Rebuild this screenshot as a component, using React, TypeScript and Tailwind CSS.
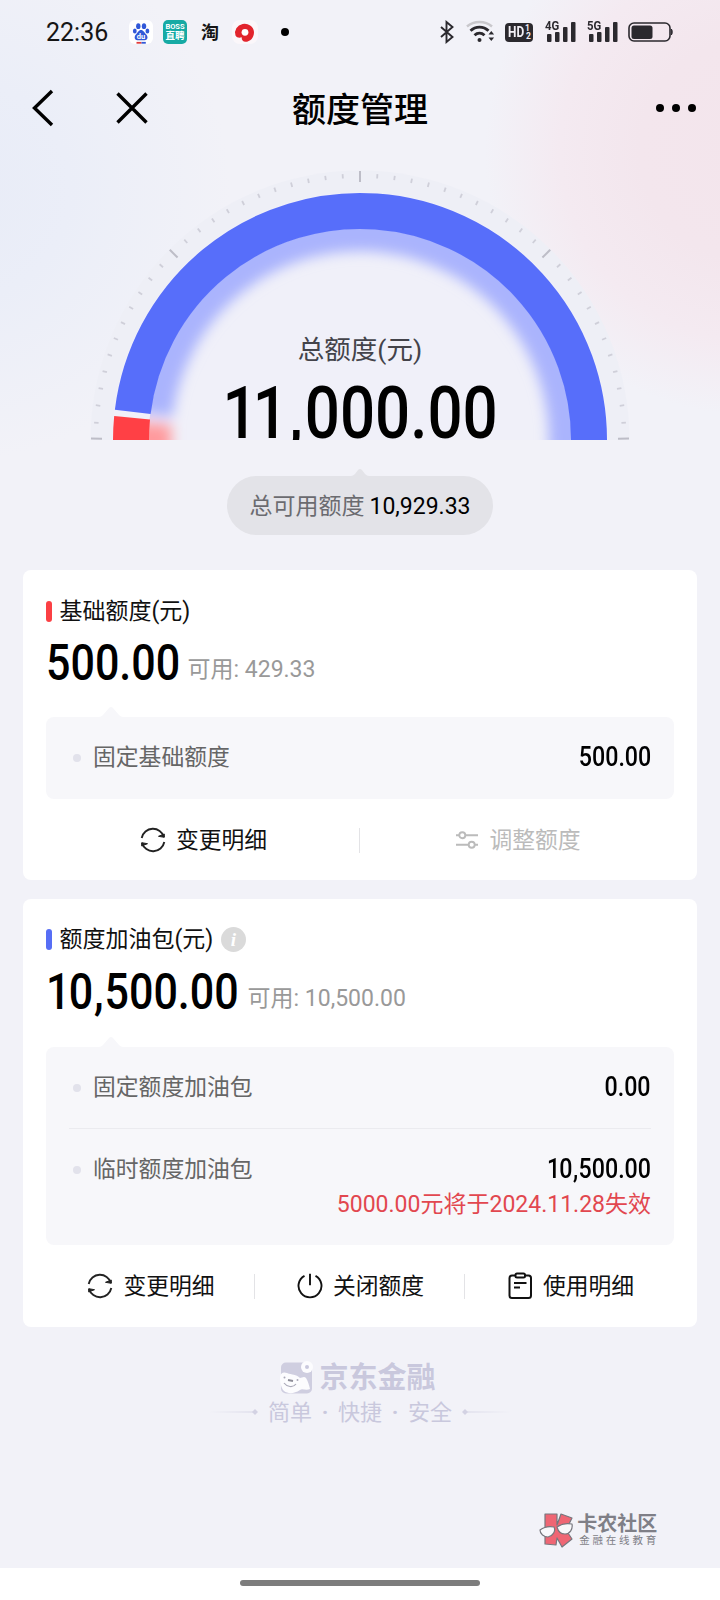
import type { ReactNode } from "react";

const CX = 360;
const CY = 288;

function point(radius: number, deg: number) {
  const a = (deg * Math.PI) / 180;
  return { x: CX - radius * Math.cos(a), y: CY - radius * Math.sin(a) };
}

function arc(radius: number, from: number, to: number) {
  const a = point(radius, from);
  const b = point(radius, to);
  return `M${a.x} ${a.y}A${radius} ${radius} 0 0 1 ${b.x} ${b.y}`;
}

function Gauge() {
  const ticks = Array.from({ length: 49 }, (_, i) => i);
  return (
    <svg className="absolute inset-0" width="720" height="288" viewBox="0 0 720 288">
      <defs>
        <clipPath id="inner">
          <circle cx={CX} cy={CY} r="211.5" />
        </clipPath>
        <filter id="soft" filterUnits="userSpaceOnUse" x="80" y="0" width="560" height="340">
          <feGaussianBlur stdDeviation="6.5" />
        </filter>
      </defs>
      <circle cx={CX} cy={CY} r="269.5" fill="#eeeff6" />
      <circle cx={CX} cy={CY} r="248" fill="#f0f0f9" />
      {ticks.map((i) => {
        const deg = i === 0 ? 0.3 : i === 48 ? 179.7 : i * 3.75;
        const major = i % 12 === 0;
        const a = point(major ? 258 : 262, deg);
        const b = point(major ? 269 : 266.5, deg);
        return (
          <line key={i} x1={a.x} y1={a.y} x2={b.x} y2={b.y} stroke={major ? "#bdbdc7" : "#cfcfd9"} strokeWidth={major ? 2 : 1.8} />
        );
      })}
      <g clipPath="url(#inner)">
        <g filter="url(#soft)">
          <path d={arc(212, 7, 187)} fill="none" stroke="#aab4fd" strokeWidth="46" />
          <path d={arc(212, -8, 4.6)} fill="none" stroke="#ff9a9d" strokeWidth="46" />
        </g>
      </g>
      <path d={arc(229, 7.05, 181)} fill="none" stroke="#576efa" strokeWidth="36" />
      <path d={arc(229, -1, 5.6)} fill="none" stroke="#ff4045" strokeWidth="36" />
    </svg>
  );
}

function Signal({ label }: { label: string }) {
  return (
    <div className="relative h-6 w-[32px]">
      <span className="absolute left-0 top-[-1px] origin-left scale-x-[.84] text-[13.5px] font-bold leading-[13px]">{label}</span>
      <svg width="32" height="24" viewBox="0 0 32 24" fill="#2b292e">
        <rect x="2" y="14" width="4.5" height="8" rx="1" />
        <rect x="10" y="12" width="4.5" height="10" rx="1" />
        <rect x="18" y="7" width="4.5" height="15" rx="1" />
        <rect x="26" y="2" width="4.5" height="20" rx="1" />
      </svg>
    </div>
  );
}

function StatusBar() {
  return (
    <div className="flex h-16 items-center pl-[46px] text-[#2b292e]">
      <span className="mt-[1px] w-[83px] text-[25px] leading-none text-[#151515]">22:36</span>
      <svg className="mr-[10px]" width="24" height="24" viewBox="0 0 24 24">
        <rect width="24" height="24" rx="6" fill="#fff" />
        <g fill="#3158d8">
          <ellipse cx="9.3" cy="6.2" rx="2.2" ry="2.9" />
          <ellipse cx="15" cy="6.2" rx="2.2" ry="2.9" />
          <ellipse cx="5.8" cy="11" rx="1.9" ry="2.5" />
          <ellipse cx="18.4" cy="11" rx="1.9" ry="2.5" />
          <path d="M12 10c-2.5 0-3 2.5-4.800 4.200C5 16 5 20.200 8.500 20.200h7.200c3.500 0 3.500-4.200 1.300-6C15.200 12.500 14.500 10 12 10z" />
        </g>
        <text x="12" y="19" textAnchor="middle" fontSize="7.500" fontWeight="700" fill="#fff">du</text>
        <path d="M7.500 22.800h5" stroke="#e23b3b" strokeWidth="1.800" />
        <path d="M12.500 22.800h4.300" stroke="#3158d8" strokeWidth="1.800" />
      </svg>
      <div className="mr-[14px] flex h-6 w-6 flex-col items-center justify-center rounded-[5px] bg-[#16aaa4] font-bold text-white">
        <span className="text-[7.5px] leading-[8px]">BOSS</span>
        <span className="text-[9.5px] leading-[10px]">直聘</span>
      </div>
      <span className="mr-[12px] mt-[2px] w-[19px] text-[18px] font-bold leading-none text-[#151515]">淘</span>
      <svg width="26" height="24" viewBox="0 0 26 24">
        <rect width="26" height="24" rx="8" fill="#fbf7fa" />
        <path d="M3.500 15.500a9.500 9 0 1 1 18.500-3.600c0 6-4 9.800-8.500 9.800-2.500 0-4-1.700-3.800-4.500-2.200 1-5 .5-6.200-1.700z" fill="#e2242c" />
        <circle cx="13" cy="12.300" r="3.400" fill="#fff" />
      </svg>
      <span className="ml-[23px] h-2 w-2 rounded-full bg-black" />
      <svg className="ml-[149px]" width="18" height="24" viewBox="0 0 18 24" fill="none" stroke="#2b292e" strokeWidth="1.900">
        <path d="M3 7l11.500 10L8.500 22V2l6 5L3 17" />
      </svg>
      <svg className="ml-[10px]" width="30" height="24" viewBox="0 0 30 24" fill="none" stroke="#2b292e">
        <path d="M1 6.500c7-6 18-6 25 0" stroke="#c9c8cc" strokeWidth="2.500" />
        <path d="M4.500 10.800c5-5 13-5 18 0M8.500 15.300c3-2.800 7-2.800 10 0" strokeWidth="2.800" />
        <circle cx="13.500" cy="20" r="2" fill="#2b292e" stroke="none" />
        <path d="M22.500 14.500l2.800-3.500 2.800 3.500zM22.500 17.500l2.800 3.500 2.800-3.500z" fill="#2b292e" stroke="none" />
      </svg>
      <div className="relative ml-[9px] mt-[1px] h-[19px] w-[28px] rounded-[4px] bg-[#2b292e] text-[#f3f0f6]">
        <span className="absolute left-[3px] top-[2px] origin-left scale-x-[.82] text-[14.500px] font-bold leading-[15px]">HD</span>
        <span className="absolute right-[3px] top-[1px] text-[8.500px] font-bold leading-[9px]">1</span>
        <span className="absolute right-[2px] top-[9px] text-[8.500px] font-bold leading-[9px]">2</span>
      </div>
      <div className="ml-[12px] flex gap-[10px]">
        <Signal label="4G" />
        <Signal label="5G" />
      </div>
      <svg className="ml-[9px]" width="46" height="24" viewBox="0 0 46 24">
        <rect x="1" y="3" width="41" height="18" rx="5" fill="none" stroke="#2b292e" strokeWidth="1.600" />
        <rect x="3.500" y="5.500" width="21" height="13.500" rx="2.500" fill="#2b292e" />
        <path d="M43.300 9c1.200.5 1.200 5.500 0 6z" fill="#2b292e" stroke="#2b292e" />
      </svg>
    </div>
  );
}

function NavBar() {
  return (
    <div className="flex h-[88px] items-center justify-between pl-[30px] pr-[22px]">
      <div className="flex w-[160px] items-center gap-[60px]">
        <svg width="26" height="40" viewBox="0 0 26 40" fill="none" stroke="#000" strokeWidth="3.400">
          <path d="M22 3L4.500 20 22 37" />
        </svg>
        <svg width="32" height="32" viewBox="0 0 32 32" fill="none" stroke="#000" strokeWidth="3.400">
          <path d="M1.500 1.500l29 29M30.500 1.500l-29 29" />
        </svg>
      </div>
      <h1 className="pt-[4px] text-[34px] font-medium leading-none text-black">额度管理</h1>
      <div className="flex w-[168px] justify-end gap-2 pr-[2px]">
        <span className="h-2 w-2 rounded-full bg-black" />
        <span className="h-2 w-2 rounded-full bg-black" />
        <span className="h-2 w-2 rounded-full bg-black" />
      </div>
    </div>
  );
}

function RefreshIcon() {
  return (
    <svg width="26" height="26" viewBox="0 0 26 26" fill="none" stroke="#222" strokeWidth="1.900">
      <path d="M1.700 11A11.500 11.500 0 0 1 24 10M24.300 15A11.500 11.500 0 0 1 2 16" />
      <path d="M18.500 9.300l5.800 1V7zM7.500 16.700l-5.800-1V19z" fill="#222" strokeWidth="1" />
    </svg>
  );
}

function PowerIcon() {
  return (
    <svg width="26" height="26" viewBox="0 0 26 26" fill="none" stroke="#111" strokeWidth="1.900">
      <path d="M7.500 2.800a11.500 11.500 0 1 0 11 0M13 .8v11.500" />
    </svg>
  );
}

function ClipboardIcon() {
  return (
    <svg width="26" height="28" viewBox="0 0 26 28" fill="none" stroke="#111" strokeWidth="2">
      <rect x="2.500" y="3.500" width="21.500" height="22.500" rx="2.500" />
      <rect x="8.500" y="1.500" width="9.500" height="4" rx="1.500" fill="#fff" />
      <path d="M7 11h12.500M7 15.500h6" />
    </svg>
  );
}

function SlidersIcon() {
  return (
    <svg width="24" height="26" viewBox="0 0 24 26" fill="none" stroke="#bbb" strokeWidth="1.900">
      <path d="M1 8.200h3.200M10.500 8.200h12.500M1 17.700h12.500M20 17.700h3" />
      <circle cx="7.300" cy="8.200" r="3" />
      <circle cx="16.700" cy="17.700" r="3" />
    </svg>
  );
}

function Card({ children }: { children: ReactNode }) {
  return <section className="mx-[23px] rounded-lg bg-white px-[23px]">{children}</section>;
}

function Figure({ value }: { value: string }) {
  const comma = value.indexOf(",");
  if (comma < 0) return <>{value}</>;
  return (
    <>
      <span className="-tracking-[.04em]">{value.slice(0, comma - 1)}</span>
      {value[comma - 1]}
      <span className="pl-[.02em] pr-[.02em]">,</span>
      {value.slice(comma + 1)}
    </>
  );
}

function BigAmount({ value, width }: { value: string; width: string }) {
  return (
    <span className={`${width} shrink-0 whitespace-nowrap`}>
      <span className="inline-block origin-left translate-y-[3px] scale-x-[.86] text-[50px] font-medium leading-[50px] text-black">
        <Figure value={value} />
      </span>
    </span>
  );
}

function Row({ label, value, note }: { label: string; value: string; note?: string }) {
  return (
    <div className="flex">
      <span className="ml-[4px] mt-[14px] h-2 w-2 shrink-0 rounded-full bg-[#e2e2eb]" />
      <span className="ml-3 pt-px text-[22.8px] leading-[33px] text-[#666]">{label}</span>
      <div className="flex flex-1 flex-col items-end">
        <span className="origin-right scale-x-[.86] pt-px text-[27px] font-medium leading-[33px] text-black">
          <Figure value={value} />
        </span>
        {note && <span className="pt-px text-[23px] leading-[36px] text-[#e2474f]">{note}</span>}
      </div>
    </div>
  );
}

function Caret() {
  return (
    <svg className="ml-[53px] block" width="24" height="12" viewBox="0 0 24 12" fill="#f7f7fa">
      <path d="M0 12q2 0 4-2l6-7q2-2 4 0l6 7q2 2 4 2z" />
    </svg>
  );
}

function Action({ icon, label, muted, width }: { icon: ReactNode; label: string; muted?: boolean; width: string }) {
  return (
    <div className={`${width} flex items-center justify-center gap-[10px] pl-[2px]`}>
      {icon}
      <span className={`pt-[2px] text-[22.8px] leading-[32px] ${muted ? "text-[#bbb]" : "text-[#111]"}`}>{label}</span>
    </div>
  );
}

function Divider() {
  return <span className="h-[25px] w-px bg-[#e3e3e6]" />;
}

function Footer() {
  return (
    <div className="flex flex-col items-center pt-[30px] text-[#c9c8dd]">
      <div className="mr-[4px] flex h-[40px] items-center gap-[6px]">
        <svg width="33" height="33" viewBox="0 0 33 33">
          <rect x="1" y="1.500" width="31" height="31" rx="5" fill="#cfcee0" />
          <path d="M0 16C1 11 4 11 7 12c5 2 9 1 13 5 2 0 4-2 6 0 2 3 3 7 4 11-4 2-8-1-10 1-6 4-12 4-16 1C1 27 0 21 0 16z" fill="#fcfcfe" />
          <circle cx="27" cy="6" r="6" fill="#fcfcfe" />
          <circle cx="27" cy="6" r="2" fill="#c9c8dd" />
          <path d="M8 19l5 1" stroke="#8d8d98" strokeWidth="2" />
          <path d="M4 22c3 4 9 5 12 1" fill="none" stroke="#aaa9b8" strokeWidth="1.200" />
          <circle cx="4.500" cy="16.500" r="1" fill="#aaa9b8" />
          <circle cx="17.500" cy="19" r="1" fill="#aaa9b8" />
        </svg>
        <span className="pt-[2px] text-[29px] font-bold leading-none">京东金融</span>
      </div>
      <div className="mt-[-3px] flex items-center gap-[9px]">
        <svg width="50" height="8" viewBox="0 0 50 8">
          <defs>
            <linearGradient id="fade">
              <stop offset="0" stopColor="#c9c8dd" stopOpacity="0" />
              <stop offset="1" stopColor="#c9c8dd" stopOpacity=".7" />
            </linearGradient>
          </defs>
          <rect y="3.500" width="46" height="1" fill="url(#fade)" />
          <path d="M43 4l3-3 3 3-3 3z" fill="#d3d2e3" />
        </svg>
        <span className="whitespace-pre pt-px text-[22px] leading-[35px]">
          <span>简单</span>
          <span className="inline-block w-[26px] text-center font-bold">·</span>
          <span>快捷</span>
          <span className="inline-block w-[26px] text-center font-bold">·</span>
          <span>安全</span>
        </span>
        <svg className="-scale-x-100" width="50" height="8" viewBox="0 0 50 8">
          <rect y="3.500" width="46" height="1" fill="url(#fade)" />
          <path d="M43 4l3-3 3 3-3 3z" fill="#d3d2e3" />
        </svg>
      </div>
    </div>
  );
}

function Watermark() {
  return (
    <div className="flex items-center gap-[2px] self-end pr-[61px]">
      <svg width="36" height="36" viewBox="0 0 36 36" stroke="#77777e" strokeWidth="1.200" strokeLinejoin="round">
        <path d="M6 2h12v11l4-11 11 4-6 12 6 9-10 8-5-9-1 7-11-1z" fill="#ef6674" />
        <path d="M1 18c4-3 9-4 14-3 2 4-1 9-6 10-4 0-8-3-8-7zM18 15c4-3 10-4 15-3 1 5-2 10-7 10-4 0-7-3-8-7z" fill="#f8f8fb" />
      </svg>
      <div className="flex flex-col text-[#7f7f87]">
        <span className="pt-[2px] text-[20px] font-bold leading-[20px]">卡农社区</span>
        <span className="pl-[2px] text-[10.500px] leading-[14px] tracking-[2.800px]">金融在线教育</span>
      </div>
    </div>
  );
}

export default function App() {
  return (
    <div
      className="flex h-[1600px] w-[720px] flex-col overflow-hidden bg-[#f2f2f8]"
      style={{ fontFamily: 'Roboto, "Noto Sans CJK SC", sans-serif' }}
    >
      <div className="h-[570px] bg-[radial-gradient(circle_at_750px_150px,#f3e5ec_0px,#f3e6ed_110px,#f4eaf1_190px,#f2f2f800_265px),radial-gradient(circle_at_-40px_190px,#e8ecf7_0px,#ebeef8_110px,#f2f2f800_270px)]">
        <StatusBar />
        <NavBar />
        <div className="relative h-[288px] overflow-hidden">
          <Gauge />
          <div className="relative flex flex-col items-center pt-[179px]">
            <span className="text-[26.500px] leading-[38px] text-[#43434a]">总额度(元)</span>
            <span className="mt-[7px] whitespace-nowrap text-[71.500px] font-medium leading-[76px] text-black">
              <span className="inline-block scale-x-[.865]">
                <span className="-tracking-[.08em]">1</span>1
                <span className="pl-[.02em] pr-[.03em]">,</span>000.00
              </span>
            </span>
          </div>
        </div>
        <div className="flex flex-col items-center pt-[29px]">
          <svg width="18" height="7" viewBox="0 0 18 7" fill="#e3e3e8">
            <path d="M0 7q2 0 4-2l3-4q2-2 4 0l3 4q2 2 4 2z" />
          </svg>
          <div className="flex h-[59px] w-[266px] items-center justify-center gap-[5px] rounded-full bg-[#e3e3e8] pt-[3px] text-[23px]">
            <span className="text-[#6b6b70]">总可用额度</span>
            <span className="text-black">10,929.33</span>
          </div>
        </div>
      </div>

      <Card>
        <div className="flex h-[310px] flex-col">
          <div className="mt-[24px] flex h-[34px] items-center gap-[7.5px] text-[23px] text-[#111]">
            <span className="h-[21px] w-[6px] rounded-full bg-[#fb4044]" />
            <span className="pt-[2px]">基础额度(元)</span>
          </div>
          <div className="mt-[7px] flex h-[51px] items-baseline">
            <BigAmount value="500.00" width="w-[141.5px]" />
            <span className="text-[23px] text-[#999]">可用: 429.33</span>
          </div>
          <div className="mt-[19px]"><Caret /></div>
          <div className="h-[82px] rounded-lg bg-[#f7f7fa] px-[23px] pt-[23px]">
            <Row label="固定基础额度" value="500.00" />
          </div>
          <div className="mt-[24px] flex items-center">
            <Action width="w-[313px]" icon={<RefreshIcon />} label="变更明细" />
            <Divider />
            <Action width="w-[314px]" icon={<SlidersIcon />} label="调整额度" muted />
          </div>
        </div>
      </Card>

      <div className="mt-[19px]">
        <Card>
          <div className="flex h-[428px] flex-col">
            <div className="mt-[23px] flex h-[34px] items-center gap-[7.5px] text-[23px] text-[#111]">
              <span className="h-[21px] w-[6px] rounded-full bg-[#576ef5]" />
              <span className="pt-[2px]">额度加油包(元)</span>
              <span className="flex h-[25px] w-[25px] items-center justify-center rounded-full bg-[#dadada] font-['Liberation_Serif',serif] text-[19px] font-bold italic leading-none text-white">i</span>
            </div>
            <div className="mt-[8px] flex h-[51px] items-baseline">
              <BigAmount value="10,500.00" width="w-[201.5px]" />
              <span className="text-[23px] text-[#999]">可用: 10,500.00</span>
            </div>
            <div className="mt-[20px]"><Caret /></div>
            <div className="h-[198px] rounded-lg bg-[#f7f7fa] px-[23px] pt-[23px]">
              <Row label="固定额度加油包" value="0.00" />
              <div className="mb-[23px] mt-[24px] h-px bg-[#ebebef]" />
              <Row label="临时额度加油包" value="10,500.00" note="5000.00元将于2024.11.28失效" />
            </div>
            <div className="mt-[24px] flex items-center">
              <Action width="w-[208px]" icon={<RefreshIcon />} label="变更明细" />
              <Divider />
              <Action width="w-[209px]" icon={<PowerIcon />} label="关闭额度" />
              <Divider />
              <Action width="w-[209px]" icon={<ClipboardIcon />} label="使用明细" />
            </div>
          </div>
        </Card>
      </div>

      <Footer />
      <div className="flex flex-1 flex-col justify-end pb-[20px]">
        <Watermark />
      </div>
      <div className="flex h-8 items-center justify-center bg-white pb-[2px]">
        <span className="h-[6px] w-[240px] rounded-full bg-[#7d7d7d]" />
      </div>
    </div>
  );
}
